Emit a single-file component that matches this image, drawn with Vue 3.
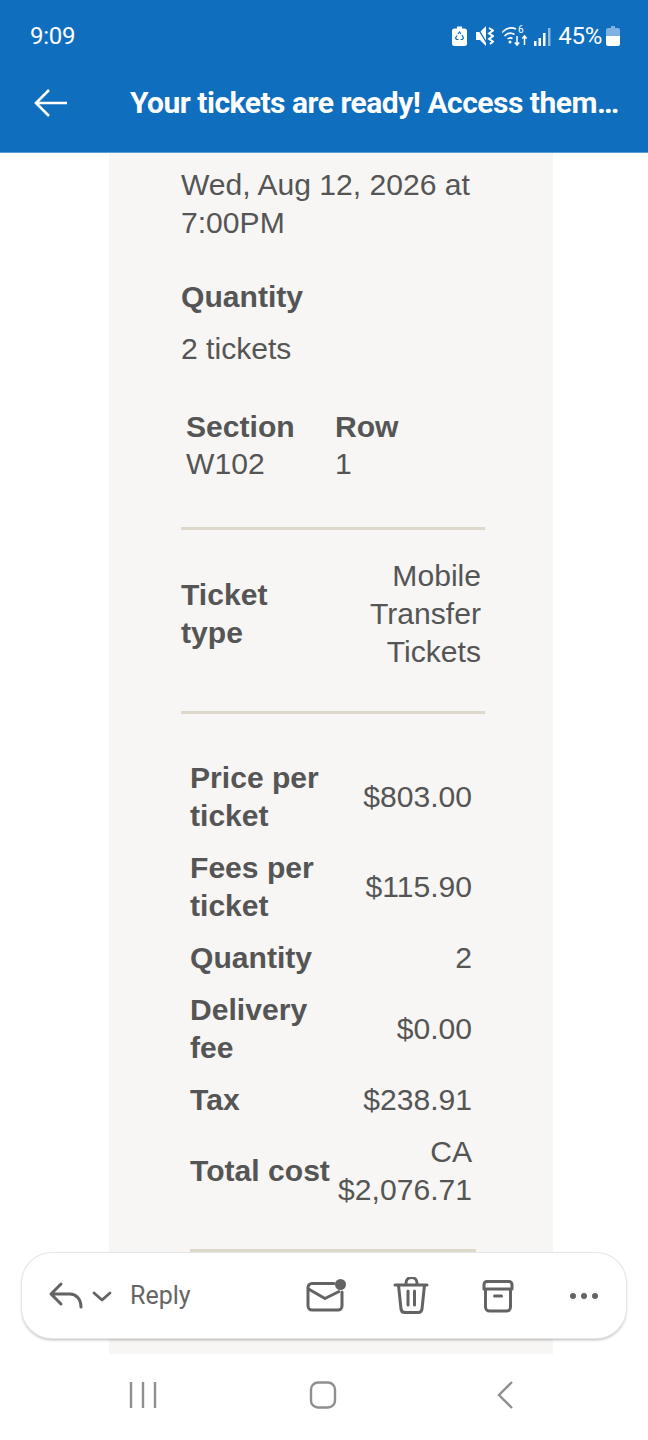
<script setup>
const prices = [
  { label: ['Price per', 'ticket'], value: ['$803.00'] },
  { label: ['Fees per', 'ticket'], value: ['$115.90'] },
  { label: ['Quantity'], value: ['2'] },
  { label: ['Delivery', 'fee'], value: ['$0.00'] },
  { label: ['Tax'], value: ['$238.91'] },
  { label: ['Total cost'], value: ['CA', '$2,076.71'] },
]
</script>

<template>
  <div class="phone">
    <header class="top">
      <div class="status">
        <span class="time">9:09</span>
        <div class="status-right">
          <svg width="15" height="20" viewBox="0 0 15 20" class="ic-recycle">
            <path d="M5 .5h5v2h2.500A2.500 2.500 0 0 1 15 5v12.500a2.500 2.500 0 0 1-2.500 2.500h-10A2.500 2.500 0 0 1 0 17.500V5a2.500 2.500 0 0 1 2.500-2.500H5z" fill="#fff" />
            <path d="M6 8l1.500-2L9 8M10 9l1.500 3-1 1.500H8.500M6.500 13.500h-2l-1-1.500L5 9.500" fill="none" stroke="#106ebe" stroke-width="1.200" />
          </svg>
          <svg width="18" height="22" viewBox="0 0 18 22" class="ic-mute">
            <path d="M0 7h4l6-6v20l-6-6H0z" fill="#fff" />
            <path d="M1 2l11 18" stroke="#106ebe" stroke-width="1.400" />
            <path d="M13 3l4 2.500-4 3 4 2.500-4 3 4 2.500-3 2.500" fill="none" stroke="#fff" stroke-width="1.900" />
          </svg>
          <svg width="26" height="22" viewBox="0 0 26 22" class="ic-wifi">
            <path d="M0 7.500c5-5 10-5.500 14-3.500M2.500 11c3-3 7-3.500 10-1.500M5.500 14c1.500-1.200 3.500-1.500 5-.5" fill="none" stroke="#fff" stroke-width="1.600" />
            <circle cx="8" cy="17" r="1.500" fill="#fff" />
            <text x="16" y="8" class="wifi-six">6</text>
            <path d="M15 11v9m-2.200-2.500l2.200 2.500 2.200-2.500M22.500 20v-9m-2.200 2.500l2.200-2.500 2.200 2.500" fill="none" stroke="#fff" stroke-width="1.500" />
          </svg>
          <svg width="17" height="20" viewBox="0 0 17 20" class="ic-signal">
            <path d="M0 15h2.500v5H0zM4.500 12H7v8H4.500zM9 7h2.500v13H9z" fill="#fff" />
            <path d="M14 2h2.500v18H14z" fill="#fff" opacity=".5" />
          </svg>
          <span class="pct">45%</span>
          <svg width="14" height="20" viewBox="0 0 14 20" class="ic-batt">
            <path d="M5 0h4v2h3a2 2 0 0 1 2 2v6H0V4a2 2 0 0 1 2-2h3z" fill="#7fb2e0" />
            <path d="M0 10h14v8a2 2 0 0 1-2 2H2a2 2 0 0 1-2-2z" fill="#fff" />
          </svg>
        </div>
      </div>
      <div class="bar">
        <svg width="36" height="32" viewBox="0 0 36 32" class="back">
          <path d="M34 16H3M16 3L3 16l13 13" fill="none" stroke="#fff" stroke-width="2.600" />
        </svg>
        <h1 class="subject">Your tickets are ready! Access them…</h1>
      </div>
    </header>

    <main class="page">
      <section class="mail">
        <div class="block">
          <p class="txt">Wed, Aug 12, 2026 at<br />7:00PM</p>
          <p class="txt strong qty-head">Quantity</p>
          <p class="txt qty-val">2 tickets</p>

          <div class="seat">
            <div class="seat-col">
              <div class="strong">Section</div>
              <div>W102</div>
            </div>
            <div class="seat-col">
              <div class="strong">Row</div>
              <div>1</div>
            </div>
          </div>

          <hr class="rule" />

          <div class="type">
            <div class="strong">Ticket<br />type</div>
            <div class="type-val">Mobile<br />Transfer<br />Tickets</div>
          </div>

          <hr class="rule rule-2" />
        </div>

        <div class="prices">
          <div v-for="p in prices" :key="p.label[0]" class="price-row">
            <div class="strong">
              <div v-for="l in p.label" :key="l">{{ l }}</div>
            </div>
            <div class="price-val">
              <div v-for="v in p.value" :key="v">{{ v }}</div>
            </div>
          </div>
        </div>
        <hr class="rule rule-3" />
      </section>
    </main>

    <div class="actions">
      <svg width="36" height="32" viewBox="0 0 36 32" class="reply-ic">
        <path d="M13 4L3 14l10 10M3 14h19c6 0 11 5 11 13" fill="none" stroke="#636363" stroke-width="3" stroke-linecap="round" stroke-linejoin="round" />
      </svg>
      <svg width="20" height="12" viewBox="0 0 20 12" class="chev">
        <path d="M2 3l8 7 8-7" fill="none" stroke="#636363" stroke-width="2.800" stroke-linecap="round" stroke-linejoin="round" />
      </svg>
      <span class="reply">Reply</span>
      <svg width="40" height="34" viewBox="0 0 40 34" class="act-mail">
        <path d="M28 4.500H6a4 4 0 0 0-4 4V27a4 4 0 0 0 4 4h26a4 4 0 0 0 4-4V13" fill="none" stroke="#636363" stroke-width="3" stroke-linecap="round" />
        <path d="M2.500 10L19 19.500 34 12" fill="none" stroke="#636363" stroke-width="3" stroke-linejoin="round" />
        <circle cx="34.500" cy="5.500" r="5.500" fill="#636363" />
      </svg>
      <svg width="36" height="38" viewBox="0 0 36 38" class="act-trash">
        <path d="M2 8h32M13 8V6a5.500 5.500 0 0 1 11 0v2M5.500 8l2.500 24a4 4 0 0 0 4 3.500h13a4 4 0 0 0 4-3.500l2.500-24M15 14v14M21.500 14v14" fill="none" stroke="#636363" stroke-width="3" stroke-linecap="round" />
      </svg>
      <svg width="32" height="34" viewBox="0 0 32 34" class="act-box">
        <path d="M5 2.500h22a3 3 0 0 1 3 3v4.500H2V5.500a3 3 0 0 1 3-3zM3.500 10v18a4 4 0 0 0 4 4h17a4 4 0 0 0 4-4V10M12.500 17h7" fill="none" stroke="#636363" stroke-width="3" stroke-linecap="round" stroke-linejoin="round" />
      </svg>
      <svg width="30" height="8" viewBox="0 0 30 8" class="act-more">
        <circle cx="4" cy="4" r="3" fill="#636363" />
        <circle cx="15" cy="4" r="3" fill="#636363" />
        <circle cx="26" cy="4" r="3" fill="#636363" />
      </svg>
    </div>

    <nav class="nav">
      <svg width="28" height="28" viewBox="0 0 28 28">
        <path d="M2 1v26M14 1v26M26 1v26" stroke="#8f8f8f" stroke-width="2.400" />
      </svg>
      <svg width="28" height="28" viewBox="0 0 28 28" class="nav-home">
        <rect x="2" y="1.500" width="24" height="25" rx="7" fill="none" stroke="#8f8f8f" stroke-width="2.400" />
      </svg>
      <svg width="18" height="30" viewBox="0 0 18 30" class="nav-back">
        <path d="M16 2L3 15l13 13" fill="none" stroke="#8f8f8f" stroke-width="2.400" />
      </svg>
    </nav>
  </div>
</template>

<style scoped>
.phone {
  position: relative;
  width: 648px;
  height: 1440px;
  overflow: hidden;
  background: #fff;
  font-family: "Liberation Sans", Arial, sans-serif;
  color: #555;
}

.top {
  height: 153px;
  background: #106ebe;
  color: #fff;
  box-sizing: border-box;
  border-bottom: 1px solid #5a9bd5;
  font-family: Roboto, sans-serif;
}

.status {
  height: 72px;
  display: flex;
  align-items: center;
  justify-content: space-between;
  padding: 0 28px 0 30px;
}

.time {
  font-size: 24px;
  letter-spacing: -.3px;
}

.status-right {
  display: flex;
  align-items: center;
}

.ic-mute {
  margin-left: 9px;
}

.ic-wifi {
  margin-left: 8px;
}

.ic-signal {
  margin-left: 6px;
}

.pct {
  font-size: 24px;
  letter-spacing: -.3px;
  margin-left: 7px;
}

.ic-batt {
  margin-left: 4px;
}

.wifi-six {
  font-size: 10px;
  font-family: Roboto, sans-serif;
  fill: #fff;
}

.bar {
  display: flex;
  align-items: center;
  height: 62px;
  padding-left: 33px;
}

.back {
  flex: none;
  margin-right: 61px;
}

.subject {
  margin: 0;
  font-size: 30px;
  font-weight: 700;
  letter-spacing: -.5px;
  line-height: 38px;
  white-space: nowrap;
}

.page {
  width: 444px;
  margin-left: 109px;
  height: 1201px;
  background: #f7f6f4;
  overflow: hidden;
}

.mail {
  font-size: 30.1px;
  line-height: 38px;
}

.block {
  padding: 13px 68px 0 72px;
}

.txt {
  margin: 0;
}

.strong {
  font-weight: 700;
}

.qty-head {
  margin-top: 36px;
}

.qty-val {
  margin-top: 14px;
}

.seat {
  display: flex;
  margin-top: 40px;
  padding-left: 5px;
  line-height: 37px;
}

.seat-col {
  width: 149px;
}

.rule {
  margin: 0;
  border: 0;
  height: 3px;
  background: #ddd8cb;
}

.block > .rule {
  margin-top: 45px;
}

.type {
  display: flex;
  align-items: center;
  justify-content: space-between;
  margin-top: 27px;
  padding-right: 4px;
}

.type-val {
  text-align: right;
}

.block > .rule-2 {
  margin-top: 40px;
}

.prices {
  display: flex;
  flex-direction: column;
  gap: 14px;
  padding: 45px 81px 0;
}

.price-row {
  display: flex;
  align-items: center;
  justify-content: space-between;
}

.price-val {
  text-align: right;
  margin-left: auto;
}

.rule-3 {
  margin: 40px 77px 0 81px;
}

.actions {
  position: absolute;
  left: 22px;
  top: 1253px;
  width: 604px;
  height: 85px;
  box-sizing: border-box;
  background: #fff;
  border-radius: 30px;
  box-shadow: 0 0 0 1px #e6e6e6, 0 2px 3px rgba(0, 0, 0, .28);
  display: flex;
  align-items: center;
  padding-left: 26px;
  color: #666;
}

.chev {
  margin-left: 8px;
}

.reply {
  font-family: Roboto, sans-serif;
  font-size: 25px;
  margin-left: 18px;
}

.act-mail {
  margin-left: 115px;
}

.act-trash {
  margin-left: 47px;
}

.act-box {
  margin-left: 53px;
}

.act-more {
  margin-left: 55px;
}

.nav {
  height: 82px;
  display: flex;
  align-items: center;
  padding-left: 129px;
  background: #fff;
}

.nav-home {
  margin-left: 152px;
}

.nav-back {
  margin-left: 159px;
}
</style>

<style>
html, body {
  margin: 0;
  background: #fff;
}
</style>
